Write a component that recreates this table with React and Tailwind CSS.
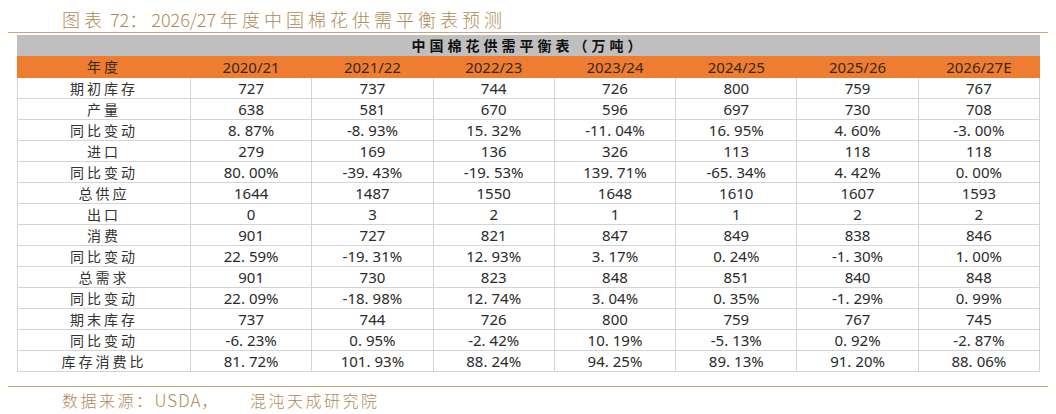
import React from 'react';

const years = ['2020/21', '2021/22', '2022/23', '2023/24', '2024/25', '2025/26', '2026/27E'];

const rows = [
    ['期初库存', ['727', '737', '744', '726', '800', '759', '767']],
    ['产量', ['638', '581', '670', '596', '697', '730', '708']],
    ['同比变动', ['8.87%', '-8.93%', '15.32%', '-11.04%', '16.95%', '4.60%', '-3.00%']],
    ['进口', ['279', '169', '136', '326', '113', '118', '118']],
    ['同比变动', ['80.00%', '-39.43%', '-19.53%', '139.71%', '-65.34%', '4.42%', '0.00%']],
    ['总供应', ['1644', '1487', '1550', '1648', '1610', '1607', '1593']],
    ['出口', ['0', '3', '2', '1', '1', '2', '2']],
    ['消费', ['901', '727', '821', '847', '849', '838', '846']],
    ['同比变动', ['22.59%', '-19.31%', '12.93%', '3.17%', '0.24%', '-1.30%', '1.00%']],
    ['总需求', ['901', '730', '823', '848', '851', '840', '848']],
    ['同比变动', ['22.09%', '-18.98%', '12.74%', '3.04%', '0.35%', '-1.29%', '0.99%']],
    ['期末库存', ['737', '744', '726', '800', '759', '767', '745']],
    ['同比变动', ['-6.23%', '0.95%', '-2.42%', '10.19%', '-5.13%', '0.92%', '-2.87%']],
    ['库存消费比', ['81.72%', '101.93%', '88.24%', '94.25%', '89.13%', '91.20%', '88.06%']],
];

// percentages in the source have a gap after the decimal point
const Num = ({ v }) => {
    if (!v.includes('.')) return v;
    const [a, b] = v.split('.');
    return (
        <>
            {a}
            <span className="mr-[4px]">.</span>
            {b}
        </>
    );
};

export default function App() {
    return (
        <div className="w-[1056px] h-[414px] bg-white overflow-hidden font-['Noto_Sans',sans-serif]">
            {/* Title */}
            <div className="h-[32px] pl-[62px] pt-[7px] text-[18px] leading-[24px] tracking-[4px] text-[#b08a55] font-['Noto_Sans_CJK_SC',sans-serif] font-light">
                图表<span className="tracking-normal"> 72</span>：<span className="tracking-normal">2026/27 </span>年度中国棉花供需平衡表预测
            </div>
            <div className="mx-[8px] border-t border-[#c9a57a]"></div>

            {/* Table */}
            <table className="ml-[17px] mt-[2px] table-fixed border-collapse w-[1023px] text-[15px] text-[#2a2a2a]">
                <colgroup>
                    <col className="w-[173px]" />
                    {years.map((y) => (
                        <col key={y} />
                    ))}
                </colgroup>
                <thead>
                    <tr className="h-[20px] bg-[#bfbfbf]">
                        <th
                            colSpan={8}
                            className="p-0 border border-[#bfbfbf] text-[14px] leading-[19px] font-bold tracking-[4px] text-[#111] font-['Noto_Sans_CJK_SC',sans-serif]"
                        >
                            中国棉花供需平衡表（万吨）
                        </th>
                    </tr>
                    <tr className="h-[22px] bg-[#ee7d31] text-[#3a2818]">
                        <th className="p-0 border border-[#ee7d31] font-normal text-[14px] tracking-[3px] font-['Noto_Sans_CJK_SC',sans-serif]">
                            年度
                        </th>
                        {years.map((y) => (
                            <th key={y} className="p-0 border border-[#ee7d31] font-normal leading-[20px]">
                                {y}
                            </th>
                        ))}
                    </tr>
                </thead>
                <tbody>
                    {rows.map(([label, vals], i) => (
                        <tr key={i} className="h-[21px]">
                            <td className="p-0 border border-[#d4d4d4] text-center text-[14px] leading-[19px] tracking-[3px] text-[#333] font-['Noto_Sans_CJK_SC',sans-serif]">
                                {label}
                            </td>
                            {vals.map((v, j) => (
                                <td key={j} className="p-0 border border-[#d4d4d4] text-center leading-[19px]">
                                    <Num v={v} />
                                </td>
                            ))}
                        </tr>
                    ))}
                </tbody>
            </table>

            {/* Source */}
            <div className="mx-[8px] mt-[14px] border-t border-[#c9a57a]"></div>
            <div className="h-[27px] pl-[62px] text-[16px] leading-[26px] tracking-[2.5px] text-[#b08a55] font-['Noto_Sans_CJK_SC',sans-serif] font-light">
                数据来源：<span className="tracking-[1px] text-[17px]">USDA</span>，<span className="ml-[30px]">混沌天成研究院</span>
            </div>
            <div className="mx-[8px] border-t border-[#c9a57a]"></div>
        </div>
    );
}
